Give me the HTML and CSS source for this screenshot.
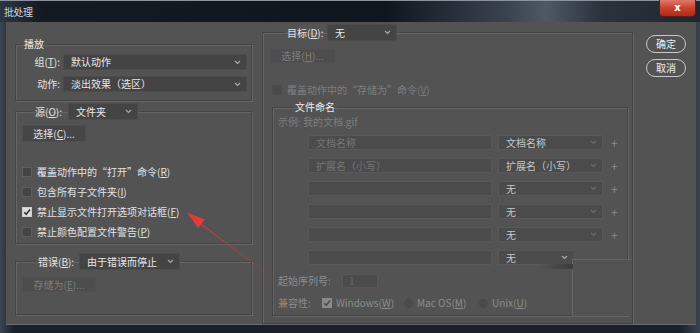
FILE: index.html
```html
<!DOCTYPE html>
<html lang="zh-CN">
<head>
<meta charset="utf-8">
<title>批处理</title>
<link rel="stylesheet" href="styles.css">
</head>
<body>
<div class="window">
  <div class="titlebar">
    <span class="title">批处理</span>
    <div class="close">x</div>
  </div>
  <div class="frame">
    <div class="client">
      <div class="col-left">
        <fieldset class="group g-play">
          <legend class="lg-text">播放</legend>
          <div class="form-grid">
            <span class="lbl">组(<u>T</u>):</span>
            <div class="select"><span>默认动作</span><svg class="chev" width="7" height="5" viewBox="0 0 7 5"><path d="M1 1l2.5 2.5L6 1"/></svg></div>
            <span class="lbl">动作:</span>
            <div class="select"><span>淡出效果（选区）</span><svg class="chev" width="7" height="5" viewBox="0 0 7 5"><path d="M1 1l2.5 2.5L6 1"/></svg></div>
          </div>
        </fieldset>

        <fieldset class="group g-source">
          <legend class="lg-ctl">
            <span class="lbl-src">源(<u>O</u>):</span>
            <div class="select s-folder"><span>文件夹</span><svg class="chev" width="7" height="5" viewBox="0 0 7 5"><path d="M1 1l2.5 2.5L6 1"/></svg></div>
          </legend>
          <div class="btn b-choose">选择(<u>C</u>)...</div>
          <div class="checks">
            <div class="check"><span class="box"></span><span>覆盖动作中的“打开”命令(<u>R</u>)</span></div>
            <div class="check"><span class="box"></span><span>包含所有子文件夹(<u>I</u>)</span></div>
            <div class="check"><span class="box on"><svg width="8" height="8" viewBox="0 0 8 8"><path d="M1.2 4.2l2 2 3.8-4.6"/></svg></span><span>禁止显示文件打开选项对话框(<u>F</u>)</span></div>
            <div class="check"><span class="box"></span><span>禁止颜色配置文件警告(<u>P</u>)</span></div>
          </div>
        </fieldset>

        <fieldset class="group g-error">
          <legend class="lg-ctl lg-err">
            <span class="lbl-err">错误(<u>B</u>):</span>
            <div class="select s-err"><span>由于错误而停止</span><svg class="chev" width="7" height="5" viewBox="0 0 7 5"><path d="M1 1l2.5 2.5L6 1"/></svg></div>
          </legend>
          <div class="btn disabled b-save">存储为(<u>E</u>)...</div>
        </fieldset>
      </div>

      <div class="col-right">
        <fieldset class="group g-dest">
          <legend class="lg-ctl lg-dest">
            <span class="lbl-dest">目标(<u>D</u>):</span>
            <div class="select s-dest"><span>无</span><svg class="chev" width="7" height="5" viewBox="0 0 7 5"><path d="M1 1l2.5 2.5L6 1"/></svg></div>
          </legend>
          <div class="btn disabled b-choose2">选择(<u>H</u>)...</div>
          <div class="check disabled c-override"><span class="box"></span><span>覆盖动作中的“存储为”命令(<u>V</u>)</span></div>

          <fieldset class="group g-naming">
            <legend class="lg-text lg-naming">文件命名</legend>
            <div class="example">示例: 我的文档.gif</div>
            <div class="rows">
              <div class="row"><div class="field">文档名称</div><div class="dsel"><span>文档名称</span><svg class="chev dim" width="7" height="5" viewBox="0 0 7 5"><path d="M1 1l2.5 2.5L6 1"/></svg></div><span class="plus">+</span></div>
              <div class="row"><div class="field">扩展名（小写）</div><div class="dsel"><span>扩展名（小写）</span><svg class="chev dim" width="7" height="5" viewBox="0 0 7 5"><path d="M1 1l2.5 2.5L6 1"/></svg></div><span class="plus">+</span></div>
              <div class="row"><div class="field"></div><div class="dsel"><span>无</span><svg class="chev dim" width="7" height="5" viewBox="0 0 7 5"><path d="M1 1l2.5 2.5L6 1"/></svg></div><span class="plus">+</span></div>
              <div class="row"><div class="field"></div><div class="dsel"><span>无</span><svg class="chev dim" width="7" height="5" viewBox="0 0 7 5"><path d="M1 1l2.5 2.5L6 1"/></svg></div><span class="plus">+</span></div>
              <div class="row"><div class="field"></div><div class="dsel"><span>无</span><svg class="chev dim" width="7" height="5" viewBox="0 0 7 5"><path d="M1 1l2.5 2.5L6 1"/></svg></div><span class="plus">+</span></div>
              <div class="row"><div class="field"></div><div class="dsel last"><span>无</span><svg class="chev" width="7" height="5" viewBox="0 0 7 5"><path d="M1 1l2.5 2.5L6 1"/></svg></div></div>
            </div>
            <div class="serial"><span class="s-lbl">起始序列号:</span><div class="field f-num">1</div></div>
            <div class="compat">
              <span class="c-lbl">兼容性:</span>
              <span class="opt o-win"><span class="box on dis"><svg width="8" height="8" viewBox="0 0 8 8"><path d="M1.2 4.2l2 2 3.8-4.6"/></svg></span><span>Windows(<u>W</u>)</span></span>
              <span class="opt o-mac"><span class="radio"></span><span>Mac OS(<u>M</u>)</span></span>
              <span class="opt o-unix"><span class="radio"></span><span>Unix(<u>U</u>)</span></span>
            </div>
            <div class="glitch"><span class="wedge"></span></div>
          </fieldset>
        </fieldset>
      </div>

      <div class="col-buttons">
        <div class="pill">确定</div>
        <div class="pill">取消</div>
      </div>
    </div>
  </div>
  <svg class="arrow" width="700" height="333" viewBox="0 0 700 333">
    <polygon points="199.6,222.4 201.4,225.0 278.6,282.4 277.4,281.6" fill="#e63a3a"/>
    <polygon points="187,212.5 204.6,219.6 198.2,228.0" fill="#e63a3a"/>
  </svg>
</div>
</body>
</html>
```

FILE: styles.css
```css
* { box-sizing: border-box; margin: 0; padding: 0; }
html, body { width: 700px; height: 333px; overflow: hidden; }
body {
  background: #161c24;
  font-family: "Noto Sans CJK SC", "Noto Sans", sans-serif;
  font-size: 10px;
  line-height: 14px;
  color: #e2e2e2;
}
u { text-decoration: underline; text-underline-offset: 1px; }

.window {
  position: relative;
  width: 700px;
  height: 333px;
  background: linear-gradient(to right, #3b4654 0, #1a212b 2%, #1a212b 97%, #3a4450 100%);
}

.titlebar {
  height: 22px;
  display: flex;
  align-items: flex-start;
  border-top: 1px solid #8a939c;
  background: linear-gradient(to right, #2d3642 0%, #141a22 6%, #10161e 55%, #38424e 72%, #4e5964 78%, #2a323c 86%, #1e2630 100%);
}
.title {
  padding: 4px 0 0 4px;
  font-size: 10px;
  color: #cfd4da;
  letter-spacing: -0.5px;
}
.close {
  margin-left: auto;
  margin-right: 4px;
  margin-top: -1px;
  width: 37px;
  height: 17px;
  border: 1px solid #5a2020;
  border-top: none;
  border-radius: 0 0 4px 4px;
  background: linear-gradient(#e07a6a, #c8422e 50%, #b02a18);
  color: #fff;
  font-family: "DejaVu Sans", sans-serif;
  font-weight: bold;
  font-size: 10px;
  line-height: 15px;
  text-align: center;
}

.frame {
  padding: 0 4px 0 6px;
}
.client {
  height: 303px;
  background: #535353;
  display: flex;
  border-bottom: 1px solid #6a6e74;
}

/* group boxes */
.group {
  border: 1px solid #444;
  box-shadow: inset 1px 1px 0 #666, 1px 1px 0 #666;
  padding: 0;
  margin: 0;
  min-width: 0;
}
legend { padding: 0 2px; }
.lg-text { line-height: 14px; color: #ececec; }
.lg-ctl { display: flex; align-items: center; height: 17px; }

/* selects */
.select {
  height: 16px;
  background: #444;
  border: 1px solid #4c4c4c;
  display: flex;
  align-items: center;
  padding: 0 5px 0 7px;
  color: #e8e8e8;
}
.select span { flex: 1; white-space: nowrap; }
.chev path { fill: none; stroke: #a8a8a8; stroke-width: 1.2; }
.chev.dim path { stroke: #6a6a6a; }

/* buttons */
.btn {
  height: 17px;
  background: #464646;
  border: 1px solid #4e4e4e;
  text-align: center;
  line-height: 15px;
  color: #e4e4e4;
}
.btn.disabled { color: #7e7e7e; background: #4d4d4d; border-color: #505050; }

/* checkboxes */
.check { display: flex; align-items: center; height: 20px; white-space: nowrap; }
.box {
  width: 10px; height: 10px;
  background: #444;
  border: 1px solid #5f5f5f;
  margin-right: 5px;
  display: flex; align-items: center; justify-content: center;
  flex: none;
}
.box.on { background: #dcdcdc; border-color: #cfcfcf; }
.box svg path { fill: none; stroke: #3a3a3a; stroke-width: 1.6; }
.box.on.dis { background: #8a8a8a; border-color: #8a8a8a; }
.box.on.dis svg path { stroke: #4e4e4e; }

/* left column */
.col-left { width: 237px; margin-left: 9px; }
.g-play { margin-top: 15px; padding: 3px 0 8px 0; }
.g-play legend { margin-left: 6px; }
.form-grid {
  display: grid;
  grid-template-columns: 44px 184px;
  column-gap: 3px;
  row-gap: 6px;
  align-items: center;
}
.lbl { text-align: right; white-space: nowrap; }

.g-source { margin-top: 2px; padding: 0 0 1px 6px; }
.g-source legend { margin-left: 11px; }
.lbl-src { width: 33px; white-space: nowrap; }
.s-folder { width: 70px; height: 17px; }
.b-choose { width: 64px; margin-top: 5px; }
.checks { margin-top: 20px; }

.g-error { margin-top: 9px; padding: 0 0 22px 6px; }
.g-error legend { margin-left: 14px; }
.lbl-err { width: 41px; white-space: nowrap; }
.s-err { width: 101px; height: 17px; }
.b-save { width: 74px; height: 15px; line-height: 13px; margin-top: 7px; }

/* right column */
.col-right { width: 371px; margin-left: 10px; }
.g-dest { margin-top: 2px; height: 300px; padding: 0 0 0 7px; }
.g-dest legend { margin-left: 15px; }
.lbl-dest { width: 40px; white-space: nowrap; }
.s-dest { width: 70px; height: 17px; }
.b-choose2 { width: 65px; height: 14px; line-height: 12px; margin-top: 8px; }
.c-override { height: 14px; margin-top: 20px; margin-left: 2px; color: #7e7e7e; }
.c-override .box { background: #4a4a4a; border-color: #4e4e4e; }

.g-naming {
  position: relative;
  width: 356px;
  margin-top: 3px;
  margin-left: 2px;
  padding: 0 0 5px 5px;
}
.lg-naming { margin-left: 7px; }
.example { margin-top: 1px; color: #7e7e7e; }
.rows { margin-top: 6px; display: flex; flex-direction: column; gap: 8px; }
.row { display: flex; align-items: center; height: 15px; margin-left: 30px; }
.field {
  width: 184px; height: 15px;
  background: #4b4b4b;
  border: 1px solid #585858;
  padding-left: 7px;
  color: #767676;
  line-height: 13px;
  white-space: nowrap;
}
.dsel {
  width: 105px; height: 15px;
  margin-left: 6px;
  background: #4b4b4b;
  border: 1px solid #585858;
  display: flex; align-items: center;
  padding: 0 5px 0 7px;
  color: #c6c6c6;
}
.dsel span { flex: 1; white-space: nowrap; }
.dsel.last { width: 75px; border-right: none; }
.plus { margin-left: 8px; color: #8a8a8a; font-size: 12px; }

.serial { display: flex; align-items: center; margin-top: 9px; height: 14px; color: #8c8c8c; }
.s-lbl { width: 64px; white-space: nowrap; }
.f-num { width: 36px; height: 14px; padding-left: 6px; line-height: 12px; color: #666; }

.compat { display: flex; align-items: center; margin-top: 8px; height: 14px; color: #8c8c8c; white-space: nowrap; }
.c-lbl { width: 44px; }
.opt { display: flex; align-items: center; }
.o-win { width: 82px; }
.o-win .box { margin-right: 4px; }
.o-mac { width: 75px; }
.radio {
  width: 9px; height: 9px; border-radius: 50%;
  background: #4a4a4a;
  margin-right: 4px;
  flex: none;
}

/* broken repaint area in the source screenshot */
.glitch {
  position: absolute;
  left: 299px;
  top: 145px;
  width: 60px;
  height: 57px;
  background: #535353;
  border-top: 1px solid #666;
  border-left: 1px solid #666;
}
.wedge {
  position: absolute;
  left: -34px;
  top: 4px;
  width: 34px;
  height: 5px;
  background: linear-gradient(to right, rgba(60,60,60,0), #3c3c3c);
}

/* dialog buttons */
.col-buttons {
  margin-left: 13px;
  padding-top: 13px;
  display: flex;
  flex-direction: column;
  gap: 6px;
}
.pill {
  width: 40px; height: 18px;
  border: 1px solid #c9c9c9;
  border-radius: 9px;
  text-align: center;
  line-height: 16px;
  color: #efefef;
}

.arrow { position: absolute; left: 0; top: 0; pointer-events: none; }
```
